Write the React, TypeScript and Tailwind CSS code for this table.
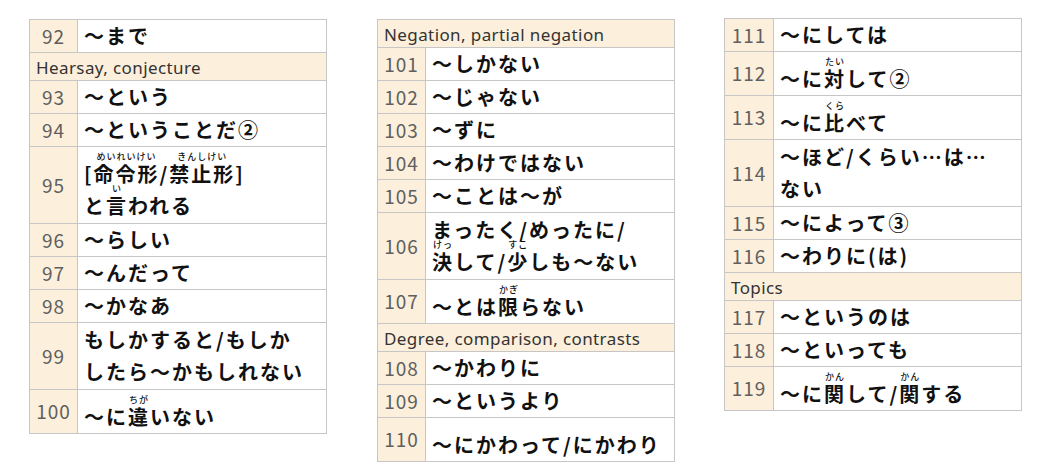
import React from "react";

type seg = string | [string, string];

type row =
    | { kind: "head"; title: string }
    | { kind: "item"; n: number; lines: seg[][]; top?: boolean };

const jp = "font-['Noto_Sans_CJK_JP','Noto_Sans',sans-serif]";

const left: row[] = [
    { kind: "item", n: 92, lines: [["〜まで"]] },
    { kind: "head", title: "Hearsay, conjecture" },
    { kind: "item", n: 93, lines: [["〜という"]] },
    { kind: "item", n: 94, lines: [["〜ということだ②"]] },
    {
        kind: "item",
        n: 95,
        top: true,
        lines: [
            ["[", ["命令形", "めいれいけい"], "/", ["禁止形", "きんしけい"], "]"],
            ["と", ["言", "い"], "われる"],
        ],
    },
    { kind: "item", n: 96, lines: [["〜らしい"]] },
    { kind: "item", n: 97, lines: [["〜んだって"]] },
    { kind: "item", n: 98, lines: [["〜かなあ"]] },
    { kind: "item", n: 99, lines: [["もしかすると/もしか"], ["したら〜かもしれない"]] },
    { kind: "item", n: 100, top: true, lines: [["〜に", ["違", "ちが"], "いない"]] },
];

const middle: row[] = [
    { kind: "head", title: "Negation, partial negation" },
    { kind: "item", n: 101, lines: [["〜しかない"]] },
    { kind: "item", n: 102, lines: [["〜じゃない"]] },
    { kind: "item", n: 103, lines: [["〜ずに"]] },
    { kind: "item", n: 104, lines: [["〜わけではない"]] },
    { kind: "item", n: 105, lines: [["〜ことは〜が"]] },
    {
        kind: "item",
        n: 106,
        lines: [["まったく/めったに/"], [["決", "けっ"], "して/", ["少", "すこ"], "しも〜ない"]],
    },
    { kind: "item", n: 107, top: true, lines: [["〜とは", ["限", "かぎ"], "らない"]] },
    { kind: "head", title: "Degree, comparison, contrasts" },
    { kind: "item", n: 108, lines: [["〜かわりに"]] },
    { kind: "item", n: 109, lines: [["〜というより"]] },
    { kind: "item", n: 110, top: true, lines: [["〜にかわって/にかわり"]] },
];

const right: row[] = [
    { kind: "item", n: 111, lines: [["〜にしては"]] },
    { kind: "item", n: 112, top: true, lines: [["〜に", ["対", "たい"], "して②"]] },
    { kind: "item", n: 113, top: true, lines: [["〜に", ["比", "くら"], "べて"]] },
    { kind: "item", n: 114, lines: [["〜ほど/くらい…は…"], ["ない"]] },
    { kind: "item", n: 115, lines: [["〜によって③"]] },
    { kind: "item", n: 116, lines: [["〜わりに(は)"]] },
    { kind: "head", title: "Topics" },
    { kind: "item", n: 117, lines: [["〜というのは"]] },
    { kind: "item", n: 118, lines: [["〜といっても"]] },
    { kind: "item", n: 119, top: true, lines: [["〜に", ["関", "かん"], "して/", ["関", "かん"], "する"]] },
];

// furigana sits over its kanji
const Ruby: React.FC<{ base: string; rt: string }> = ({ base, rt }) => (
    <span className="relative inline-block">
        {base}
        <span className="absolute left-1/2 top-[-6px] -translate-x-1/2 whitespace-nowrap text-[9px] leading-none tracking-[1px] font-medium">
            {rt}
        </span>
    </span>
);

const GrammarTable: React.FC<{ rows: row[]; numW: string }> = ({ rows, numW }) => {
    return (
        <div className="w-[298px] border-x border-t border-[#c6c6c6] bg-white">
            {rows.map((r, i) => {
                if (r.kind === "head") {
                    return (
                        <div
                            key={i}
                            className="h-[28px] border-b border-[#c6c6c6] bg-[#fcefdb] pl-[6px] text-[17px] leading-[29px] tracking-[0.4px] text-[#333] font-['Noto_Sans',sans-serif]"
                        >
                            {r.title}
                        </div>
                    );
                }
                const multi = r.lines.length > 1;
                return (
                    <div key={i} className="flex border-b border-[#c6c6c6]">
                        <div
                            className={`${numW} flex shrink-0 items-center justify-center border-r border-[#c6c6c6] bg-[#fcefdb] text-[19px] tracking-[1px] text-[#5f5f5f] tabular-nums ${jp}`}
                        >
                            {r.n}
                        </div>
                        <div
                            className={`flex-1 pl-[6px] text-[20px] font-bold tracking-[2px] text-[#111] ${jp} ${
                                r.top ? "pt-[11px]" : ""
                            } ${multi ? "pb-px" : ""} ${multi && !r.top ? "pt-px" : ""}`}
                        >
                            {r.lines.map((line, j) => (
                                <div key={j} className="h-[32px] whitespace-nowrap leading-[32px]">
                                    {line.map((s, k) =>
                                        typeof s === "string" ? (
                                            <span key={k}>{s}</span>
                                        ) : (
                                            <Ruby key={k} base={s[0]} rt={s[1]} />
                                        )
                                    )}
                                </div>
                            ))}
                        </div>
                    </div>
                );
            })}
        </div>
    );
};

export default function App() {
    return (
        <div className="min-h-[476px] w-[1062px] bg-white pl-[29px] pt-[19px]">
            <div className="flex items-start">
                <GrammarTable rows={left} numW="w-[48px]" />
                <div className="ml-[50px]">
                    <GrammarTable rows={middle} numW="w-[48px]" />
                </div>
                <div className="ml-[49px] -mt-px">
                    <GrammarTable rows={right} numW="w-[49px]" />
                </div>
            </div>
        </div>
    );
}
